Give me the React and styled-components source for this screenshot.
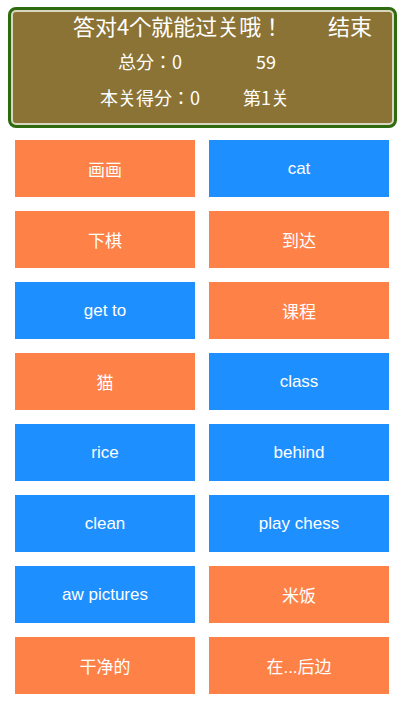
import React from "react"
import styled, { createGlobalStyle } from "styled-components"

const GlobalStyle = createGlobalStyle`
  body {
    margin: 0;
    background: #ffffff;
    font-family: "Liberation Sans", "Noto Sans CJK SC", sans-serif;
  }
`

const Page = styled.div`
  width: 405px;
  padding-top: 7px;
`

const Board = styled.div`
  margin: 0 8px;
  height: 121px;
  box-sizing: border-box;
  border: 3px solid #2e6a10;
  border-radius: 8px;
  background: #2e6a10;
`

const BoardInner = styled.div`
  height: 100%;
  box-sizing: border-box;
  border: 2px solid #d9d6bf;
  border-radius: 5px;
  background: #8b7335;
  color: #ffffff;
  display: flex;
  flex-direction: column;
  font-family: "Noto Sans CJK JP", sans-serif;
  line-height: 1.2;
`

const TitleRow = styled.div`
  display: flex;
  align-items: center;
  box-sizing: border-box;
  height: 32px;
  padding: 0 20px 6px 60px;
  font-size: 22px;
`

const Finish = styled.span`
  margin-left: auto;
`

const InfoRow = styled.div`
  display: grid;
  grid-template-columns: 116px 116px;
  justify-content: center;
  padding-left: 11px;
  height: 36px;
  align-items: center;
  font-size: 18px;
  text-align: center;
`

const Grid = styled.div`
  display: grid;
  grid-template-columns: 1fr 1fr;
  grid-auto-rows: 57px;
  column-gap: 14px;
  row-gap: 14px;
  padding: 12px 16px 0 15px;
`

const Tile = styled.div`
  display: flex;
  align-items: center;
  justify-content: center;
  background: ${p => (p.$blue ? "#1e8ffe" : "#fe8148")};
  color: #ffffff;
  font-size: 17px;
`

const tiles = [
  ["画画", false], ["cat", true],
  ["下棋", false], ["到达", false],
  ["get to", true], ["课程", false],
  ["猫", false], ["class", true],
  ["rice", true], ["behind", true],
  ["clean", true], ["play chess", true],
  ["aw pictures", true], ["米饭", false],
  ["干净的", false], ["在...后边", false],
]

export default function App() {
  return (
    <Page>
      <GlobalStyle />
      <Board>
        <BoardInner>
          <TitleRow>
            <span>答对4个就能过关哦！</span>
            <Finish>结束</Finish>
          </TitleRow>
          <InfoRow>
            <span>总分：0</span>
            <span>59</span>
          </InfoRow>
          <InfoRow>
            <span>本关得分：0</span>
            <span>第1关</span>
          </InfoRow>
        </BoardInner>
      </Board>
      <Grid>
        {tiles.map(([text, blue], i) => (
          <Tile key={i} $blue={blue}>{text}</Tile>
        ))}
      </Grid>
    </Page>
  )
}
